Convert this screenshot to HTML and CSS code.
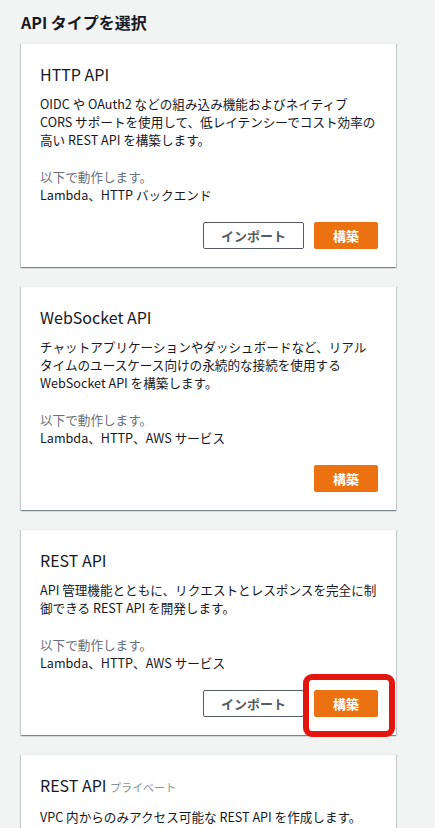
FILE: index.html
```html
<!DOCTYPE html>
<html lang="ja">
  <head>
    <meta charset="UTF-8" />
    <meta name="viewport" content="width=device-width, initial-scale=1.0" />
    <title>API タイプを選択</title>

    <link rel="stylesheet" href="styles.css">
  </head>
  <body>
    <section class="api-types">
      <h2>API タイプを選択</h2>

      <div class="api-card">
        <div class="title">HTTP API</div>
        <p class="desc">
          OIDC や OAuth2 などの組み込み機能およびネイティブ<br />
          CORS サポートを使用して、低レイテンシーでコスト効率の<br />
          高い REST API を構築します。
        </p>
        <p class="works">
          <span class="muted">以下で動作します。</span><br />
          Lambda、HTTP バックエンド
        </p>
        <div class="actions">
          <button class="btn">インポート</button>
          <button class="btn primary">構築</button>
        </div>
      </div>

      <div class="api-card">
        <div class="title">WebSocket API</div>
        <p class="desc">
          チャットアプリケーションやダッシュボードなど、リアル<br />
          タイムのユースケース向けの永続的な接続を使用する<br />
          WebSocket API を構築します。
        </p>
        <p class="works">
          <span class="muted">以下で動作します。</span><br />
          Lambda、HTTP、AWS サービス
        </p>
        <div class="actions">
          <button class="btn primary">構築</button>
        </div>
      </div>

      <div class="api-card">
        <div class="title">REST API</div>
        <p class="desc">
          API 管理機能とともに、リクエストとレスポンスを完全に制<br />
          御できる REST API を開発します。
        </p>
        <p class="works">
          <span class="muted">以下で動作します。</span><br />
          Lambda、HTTP、AWS サービス
        </p>
        <div class="actions">
          <button class="btn">インポート</button>
          <span class="highlight">
            <button class="btn primary">構築</button>
          </span>
        </div>
      </div>

      <div class="api-card">
        <div class="title">REST API <span class="tag">プライベート</span></div>
        <p class="desc">
          VPC 内からのみアクセス可能な REST API を作成します。
        </p>
      </div>
    </section>
  </body>
</html>
```

FILE: styles.css
```css
html,
body {
  height: 100%;
}

body {
  margin: 0;
  background: #f2f3f3;
  color: #16191f;
  font-family: "Noto Sans CJK JP", "Noto Sans", sans-serif;
  overflow: hidden;
}

.api-types {
  width: 375px;
  padding: 12px 0 0 21px;
}

h2 {
  margin: 0 0 11px;
  font-size: 16px;
  line-height: 20px;
  font-weight: bold;
}

.api-card {
  background: white;
  border-top: 1px solid #eaeded;
  padding: 19px 18px 18px 19px;
  margin-bottom: 19px;
  box-shadow: 0 1px 1px 0 rgba(0, 28, 36, 0.3),
    1px 1px 1px 0 rgba(0, 28, 36, 0.15),
    -1px 1px 1px 0 rgba(0, 28, 36, 0.15);
}

.api-card > .title {
  font-size: 16px;
  line-height: 22px;
  margin-bottom: 10px;
}

.api-card > .title > .tag {
  font-size: 11px;
  color: #879596;
}

.api-card > .desc,
.api-card > .works {
  margin: 0;
  font-size: 12.6px;
  line-height: 18px;
  white-space: nowrap;
}

.api-card > .works {
  margin-top: 19px;
}

.muted {
  color: #687078;
}

.actions {
  display: flex;
  justify-content: flex-end;
  gap: 10px;
  margin-top: 18px;
}

.btn {
  width: 101px;
  height: 27px;
  padding: 0;
  border: 1px solid #545b64;
  border-radius: 2px;
  background: white;
  color: #545b64;
  font-family: inherit;
  font-size: 13px;
  font-weight: bold;
  line-height: 25px;
  white-space: nowrap;
}

.btn.primary {
  width: 64px;
  border-color: #ec7211;
  background: #ec7211;
  color: white;
}

.highlight {
  position: relative;
  display: flex;
}

.highlight::after {
  content: "";
  position: absolute;
  top: -16px;
  left: -11px;
  right: -17px;
  bottom: -20px;
  border: 6px solid #e3150f;
  border-radius: 9px;
}
```
